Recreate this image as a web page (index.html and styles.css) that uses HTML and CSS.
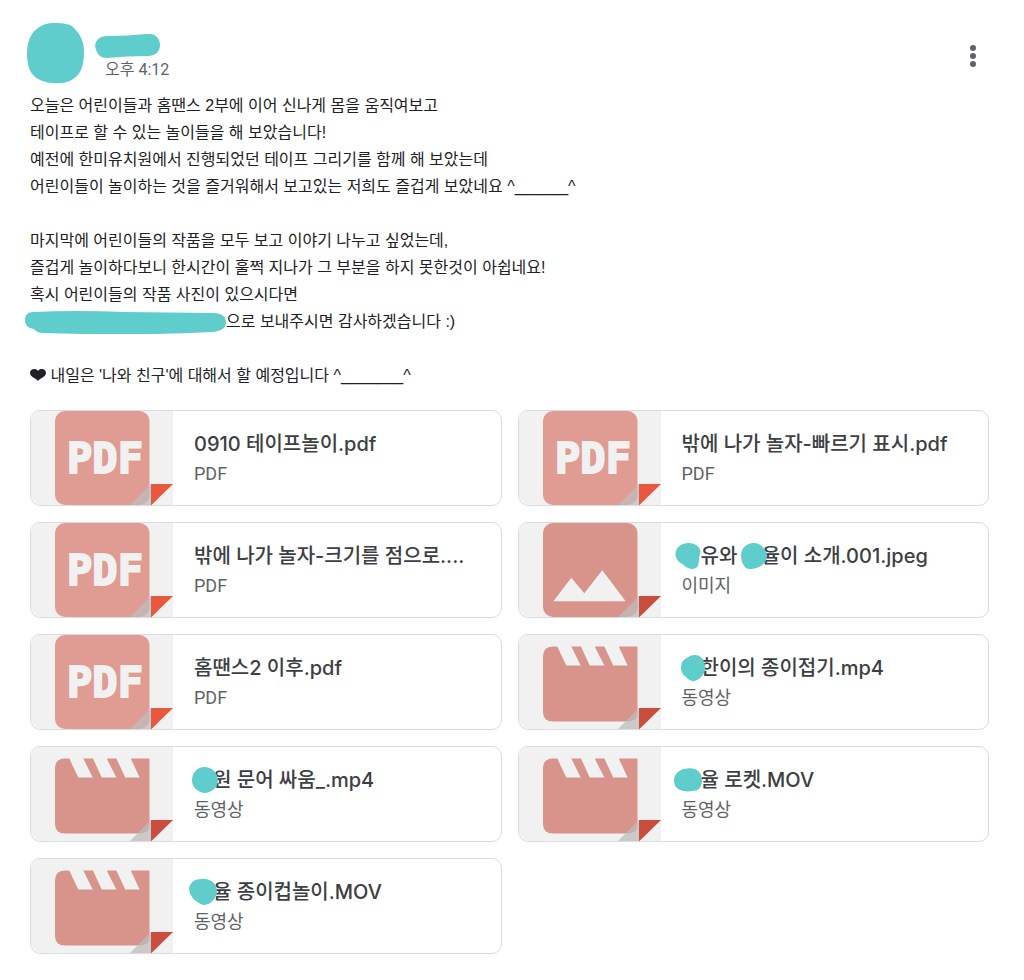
FILE: index.html
```html
<!DOCTYPE html>
<html lang="ko">
<head>
<meta charset="utf-8">
<meta name="viewport" content="width=device-width, initial-scale=1">
<title>수업 게시물</title>
<link rel="stylesheet" href="styles.css">
</head>
<body>
<svg class="defs" aria-hidden="true">
  <symbol id="pdf" viewBox="0 0 142 94">
    <rect x="24" y="0" width="94.500" height="94" rx="10" fill="#e09b93"/>
    <path d="M99 94L120 73V94Z" fill="#bcbcbc" fill-opacity=".75"/>
    <path d="M120 73H142L120 94.500Z" fill="#e9583e"/>
  </symbol>
  <symbol id="image" viewBox="0 0 142 94">
    <rect x="24" y="0" width="94.500" height="94" rx="10" fill="#d8938b"/>
    <path d="M34.300 78.300L52.300 54.700 65.300 70.300 83.300 47.300 106.700 78.300Z" fill="#f1f1f1"/>
    <path d="M99 94L120 73V94Z" fill="#bcbcbc" fill-opacity=".75"/>
    <path d="M120 73H142L120 94.500Z" fill="#ca4e40"/>
  </symbol>
  <symbol id="video" viewBox="0 0 142 94">
    <path d="M34 11.500H38.300L47.300 30.500H61.700L52.300 11.500H62L70.700 30.500H85.300L75.700 11.500H85.300L94.300 30.500H108.700L99.700 11.500H118.500V77Q118.500 86.500 109 86.500H34Q24 86.500 24 77V21.500Q24 11.500 34 11.500Z" fill="#d8938b"/>
    <path d="M99 94L120 73V94Z" fill="#bcbcbc" fill-opacity=".75"/>
    <path d="M120 73H142L120 94.500Z" fill="#ca4e40"/>
  </symbol>
</svg>
<main class="post">
  <header class="post-header">
    <svg class="avatar" viewBox="0 0 57 61" aria-hidden="true"><path d="M28 0C36 0 43 1 46 4C53 11 57 18 57 28C57 43 54 51 46 56C38 62 21 61 13 57C4 53 0 44 0 31C0 18 4 10 11 5C16 1 22 0 28 0Z"/></svg>
    <div class="author">
      <svg class="name" viewBox="0 0 65 24" aria-hidden="true"><path d="M12 2Q33 2 52 0C61-1 65 5 65 11C65 18 60 22 53 22Q32 22 12 24C6 24 3 21 1 16C-2 8 4 2 12 2Z"/></svg>
      <time class="time">오후 4:12</time>
    </div>
    <button class="menu" type="button" aria-label="옵션 더보기"><svg viewBox="0 0 24 24" aria-hidden="true"><circle cx="12" cy="4" r="3"/><circle cx="12" cy="12" r="3"/><circle cx="12" cy="20" r="3"/></svg></button>
  </header>
  <div class="body">
    <p>오늘은 어린이들과 홈땐스 2부에 이어 신나게 몸을 움직여보고<br>테이프로 할 수 있는 놀이들을 해 보았습니다!<br>예전에 한미유치원에서 진행되었던 테이프 그리기를 함께 해 보았는데<br>어린이들이 놀이하는 것을 즐거워해서 보고있는 저희도 즐겁게 보았네요 ^______^</p>
    <p>마지막에 어린이들의 작품을 모두 보고 이야기 나누고 싶었는데,<br>즐겁게 놀이하다보니 한시간이 훌쩍 지나가 그 부분을 하지 못한것이 아쉽네요!<br>혹시 어린이들의 작품 사진이 있으시다면<br><svg class="address" viewBox="0 0 201 23" aria-hidden="true"><path d="M8 1Q50-1 100 1L188 2C197 2 201 6 201 11C201 17 196 20 188 21Q110 25 17 22Q11 21 9 18C2 17 0 13 0 9C0 4 3 1 8 1Z"/></svg>으로 보내주시면 감사하겠습니다 :)</p>
    <p><svg class="heart" viewBox="0 0 16 12" aria-hidden="true"><path d="M8 12C6 9 0 8 0 4C0-.5 6-1 8 2C10-1 16-.5 16 4C16 8 10 9 8 12Z"/></svg> 내일은 '나와 친구'에 대해서 할 예정입니다 ^_______^</p>
  </div>
  <div class="files">
    <a class="card" href="#"><svg class="thumb" viewBox="0 0 142 94" aria-hidden="true"><use href="#pdf"/><text class="pdf-label" x="74" y="62">PDF</text></svg><span class="info"><span class="title">0910 테이프놀이.pdf</span><span class="kind">PDF</span></span></a>
    <a class="card" href="#"><svg class="thumb" viewBox="0 0 142 94" aria-hidden="true"><use href="#pdf"/><text class="pdf-label" x="74" y="62">PDF</text></svg><span class="info"><span class="title">밖에 나가 놀자-빠르기 표시.pdf</span><span class="kind">PDF</span></span></a>
    <a class="card" href="#"><svg class="thumb" viewBox="0 0 142 94" aria-hidden="true"><use href="#pdf"/><text class="pdf-label" x="74" y="62">PDF</text></svg><span class="info"><span class="title">밖에 나가 놀자-크기를 점으로....</span><span class="kind">PDF</span></span></a>
    <a class="card" href="#"><svg class="thumb" viewBox="0 0 142 94" aria-hidden="true"><use href="#image"/></svg><span class="info"><span class="title"><span class="mask"><svg class="blob wide" viewBox="0 0 27 28" aria-hidden="true"><path d="M14 0C21 0 27 4 27 10C25 14 26 20 24 25C20 30 12 28 8 23C2 20 0 16 0 11C1 4 7 0 14 0Z"/></svg></span>유와 <span class="mask"><svg class="blob" viewBox="0 0 25 25" aria-hidden="true"><path d="M11 0C18-1 25 6 25 13C24 21 16 25 9 25C2 25 0 17 0 11C1 4 5 1 11 0Z"/></svg></span>율이 소개.001.jpeg</span><span class="kind">이미지</span></span></a>
    <a class="card" href="#"><svg class="thumb" viewBox="0 0 142 94" aria-hidden="true"><use href="#pdf"/><text class="pdf-label" x="74" y="62">PDF</text></svg><span class="info"><span class="title">홈땐스2 이후.pdf</span><span class="kind">PDF</span></span></a>
    <a class="card" href="#"><svg class="thumb" viewBox="0 0 142 94" aria-hidden="true"><use href="#video"/></svg><span class="info"><span class="title"><span class="mask"><svg class="blob" viewBox="0 0 25 27" aria-hidden="true"><path d="M14 0C20 0 24 4 25 11C26 17 22 25 14 27C8 27 7 24 3 21C-1 17-1 9 3 5C7 3 9 0 14 0Z"/></svg></span>한이의 종이접기.mp4</span><span class="kind">동영상</span></span></a>
    <a class="card" href="#"><svg class="thumb" viewBox="0 0 142 94" aria-hidden="true"><use href="#video"/></svg><span class="info"><span class="title"><span class="mask"><svg class="blob" viewBox="0 0 25 25" aria-hidden="true"><path d="M12 0C19 0 25 6 25 13C25 20 18 25 12 25C5 24 0 19 0 13C0 6 5 0 12 0Z"/></svg></span>원 문어 싸움_.mp4</span><span class="kind">동영상</span></span></a>
    <a class="card" href="#"><svg class="thumb" viewBox="0 0 142 94" aria-hidden="true"><use href="#video"/></svg><span class="info"><span class="title"><span class="mask"><svg class="blob wide" viewBox="0 0 29 24" aria-hidden="true"><path d="M14 0C24-1 29 5 29 12C29 18 26 23 22 23C12 25 0 24 0 12C0 5 7 0 14 0Z"/></svg></span>율 로켓.MOV</span><span class="kind">동영상</span></span></a>
    <a class="card" href="#"><svg class="thumb" viewBox="0 0 142 94" aria-hidden="true"><use href="#video"/></svg><span class="info"><span class="title"><span class="mask"><svg class="blob mid" viewBox="0 0 27 25" aria-hidden="true"><path d="M12 0C19-1 27 3 27 12C26 20 20 25 14 25C7 23 0 17 0 9C1 3 6 0 12 0Z"/></svg></span>율 종이컵놀이.MOV</span><span class="kind">동영상</span></span></a>
  </div>
</main>
</body>
</html>
```
FILE: styles.css
```css
* { box-sizing: border-box; }

body {
  margin: 0;
  background: #fff;
  color: #202124;
  font-family: Roboto, "Noto Sans CJK KR", sans-serif;
}

.defs { position: absolute; width: 0; height: 0; }

.pdf-label {
  fill: #f1f1f1;
  stroke: #f1f1f1;
  stroke-width: 2px;
  font-family: "DejaVu Sans Mono", monospace;
  font-size: 42px;
  font-weight: 700;
  text-anchor: middle;
}

.post { padding: 23px 35px 24px 30px; }

.post-header { display: flex; align-items: flex-start; }

.avatar { width: 57px; height: 61px; margin-left: -3px; }

.avatar, .name, .address, .blob { fill: #5ecdcb; }

.author {
  display: flex;
  flex: 1;
  flex-direction: column;
  padding: 11px 0 0 11px;
}

.name { width: 65px; height: 24px; }

.time {
  padding-left: 10px;
  color: #5f6368;
  font-size: 16px;
  line-height: 24px;
}

.menu {
  display: flex;
  align-items: center;
  justify-content: center;
  width: 32px;
  height: 32px;
  margin-top: 17px;
  padding: 0;
  border: 0;
  background: none;
  fill: #5f6368;
}

.menu svg { width: 24px; height: 24px; }

.body {
  padding: 8px 0 21px;
  font-family: "Liberation Sans", "Noto Sans CJK KR", sans-serif;
  font-size: 16px;
  line-height: 27px;
}

.body p { margin: 0 0 27px; }

.body p:last-child { margin: 0; }

.address {
  width: 201px;
  height: 23px;
  margin-left: -5px;
  vertical-align: middle;
}

.heart { width: 16px; height: 12px; fill: #202124; }

.files {
  display: grid;
  grid-template-columns: repeat(2, minmax(0, 1fr));
  gap: 16px;
}

.card {
  display: flex;
  height: 96px;
  overflow: hidden;
  border: 1px solid #dadce0;
  border-radius: 10px;
  color: inherit;
  text-decoration: none;
}

.thumb { flex: none; width: 142px; height: 94px; background: #f1f1f1; }

.info {
  display: flex;
  flex: 1;
  flex-direction: column;
  justify-content: center;
  min-width: 0;
  padding-left: 21px;
}

.title {
  color: #3c4043;
  font-family: Inter, "Noto Sans CJK KR", sans-serif;
  font-size: 20px;
  font-weight: 500;
  line-height: 32px;
  white-space: nowrap;
}

.kind { color: #5f6368; font-size: 18px; line-height: 28px; }

.mask { display: inline-block; position: relative; width: 19px; height: 20px; vertical-align: middle; }

.blob { position: absolute; top: -5px; left: -2px; width: 26px; height: 26px; }

.blob.wide { left: -8px; width: 28px; }

.blob.mid { left: -5px; width: 28px; }
```
